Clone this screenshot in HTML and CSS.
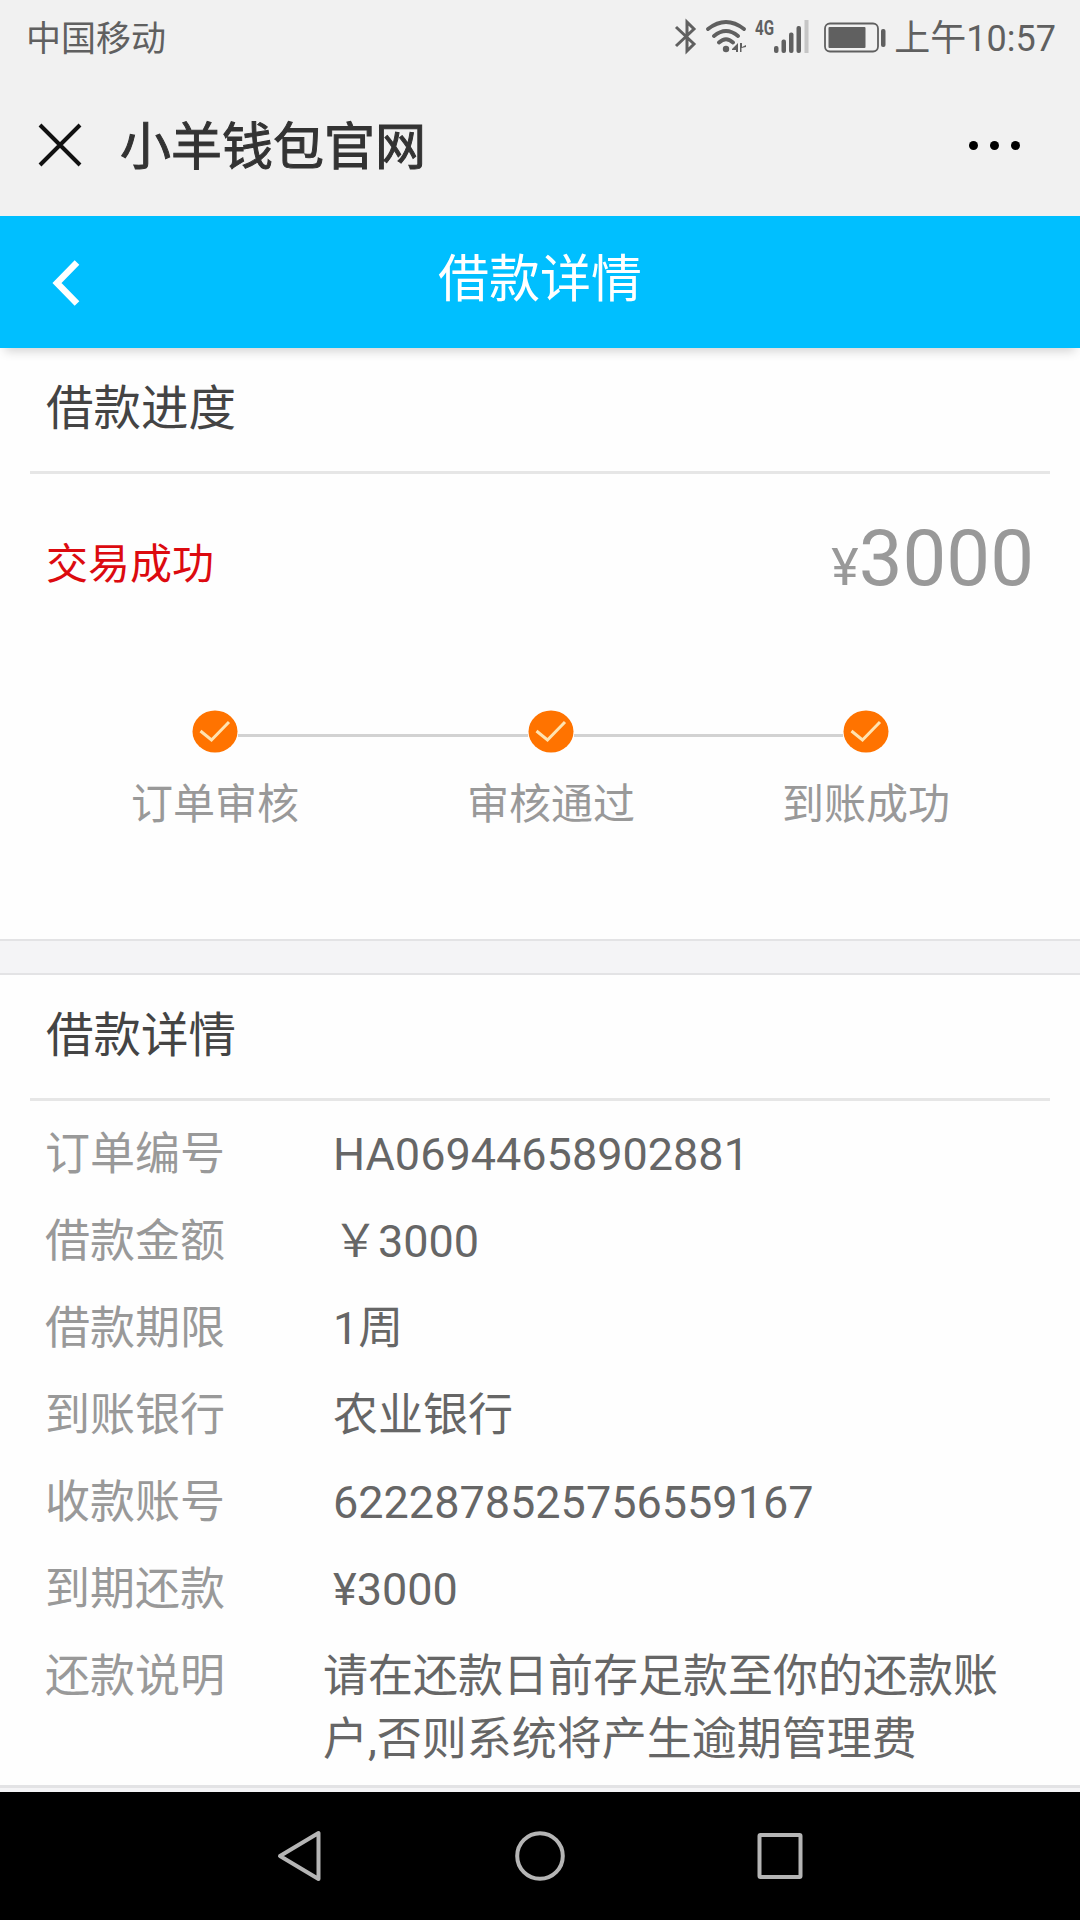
FILE: index.html
```html
<!DOCTYPE html>
<html lang="zh-CN">
<head>
    <meta charset="UTF-8">
    <meta name="viewport" content="width=device-width, initial-scale=1.0">
    <title>小羊钱包官网</title>
    <link rel="stylesheet" href="styles.css">
</head>
<body>
    <div class="status-bar">
        <span class="carrier">中国移动</span>
        <svg class="icon-status" width="214" height="40" viewBox="0 0 214 40">
            <!-- bluetooth -->
            <path class="line bt" d="M2 11 L20 28 L13 35 V6 L20 13 L2 30"/>
            <!-- wifi -->
            <path class="line wifi" d="M34 13 Q52 -1 70 13 M40 20 Q52 10 64 20 M45 26.500 Q52 20 59 26.500"/>
            <circle class="solid" cx="52" cy="33" r="3.200"/>
            <path class="solid" d="M58 33 L64 27 V36 H62 V34 H58 Z M66 27 V36 L67.500 36 V32 L72 31 V29 L68 31 V27 Z"/>
            <!-- signal -->
            <text class="net" x="81" y="19" textLength="19" lengthAdjust="spacingAndGlyphs">4G</text>
            <rect class="solid" x="100" y="30" width="4.500" height="7" rx="2"/>
            <rect class="solid" x="107.500" y="23.500" width="4.500" height="13.500" rx="2"/>
            <rect class="solid" x="115" y="16.500" width="4.500" height="20.500" rx="2"/>
            <rect class="solid" x="122.500" y="10" width="4.500" height="27" rx="2"/>
            <rect class="weak" x="130.500" y="4" width="4" height="33"/>
            <!-- battery -->
            <rect class="line shell" x="151" y="7.500" width="53" height="28" rx="5"/>
            <rect class="solid" x="154.500" y="11" width="37" height="21" rx="1"/>
            <rect class="solid" x="207" y="13" width="4.500" height="18" rx="2"/>
        </svg>
        <span class="clock">上午10:57</span>
    </div>

    <div class="title-bar">
        <svg class="close" width="44" height="44" viewBox="0 0 44 44">
            <path d="M2 2 L42 42 M42 2 L2 42"/>
        </svg>
        <h1>小羊钱包官网</h1>
        <div class="more"><i></i><i></i><i></i></div>
    </div>

    <div class="page-header">
        <svg class="back" width="28" height="46" viewBox="0 0 28 46">
            <path d="M25 2.500 L5 23 L25 43.500"/>
        </svg>
        <h2>借款详情</h2>
    </div>

    <div class="section progress">
        <h3>借款进度</h3>
        <div class="summary">
            <span class="state">交易成功</span>
            <span class="amount"><small>¥</small>3000</span>
        </div>
        <div class="steps">
            <div class="step">
                <svg width="46" height="43" viewBox="0 0 46 43"><ellipse cx="23" cy="21.500" rx="22.500" ry="21"/><path d="M8.500 21 L19.500 30 L37 12"/></svg>
                <span>订单审核</span>
            </div>
            <div class="bar"></div>
            <div class="step">
                <svg width="46" height="43" viewBox="0 0 46 43"><ellipse cx="23" cy="21.500" rx="22.500" ry="21"/><path d="M8.500 21 L19.500 30 L37 12"/></svg>
                <span>审核通过</span>
            </div>
            <div class="bar bar-short"></div>
            <div class="step">
                <svg width="46" height="43" viewBox="0 0 46 43"><ellipse cx="23" cy="21.500" rx="22.500" ry="21"/><path d="M8.500 21 L19.500 30 L37 12"/></svg>
                <span>到账成功</span>
            </div>
        </div>
    </div>

    <div class="gap"></div>

    <div class="section detail">
        <h3>借款详情</h3>
        <dl>
            <dt>订单编号</dt><dd>HA06944658902881</dd>
            <dt>借款金额</dt><dd>￥3000</dd>
            <dt>借款期限</dt><dd>1周</dd>
            <dt>到账银行</dt><dd>农业银行</dd>
            <dt>收款账号</dt><dd>6222878525756559167</dd>
            <dt>到期还款</dt><dd>¥3000</dd>
            <dt>还款说明</dt><dd class="note">请在还款日前存足款至你的还款账户,否则系统将产生逾期管理费</dd>
        </dl>
    </div>

    <div class="nav-bar">
        <svg width="50" height="56" viewBox="0 0 50 56"><path d="M5 28 L43.500 5 V51 Z"/></svg>
        <svg width="56" height="56" viewBox="0 0 56 56"><circle cx="28" cy="28" r="22.800"/></svg>
        <svg width="50" height="56" viewBox="0 0 50 56"><rect x="4.500" y="7" width="41" height="42" rx="1"/></svg>
    </div>
</body>
</html>
```
FILE: styles.css
```css
* {
    box-sizing: border-box;
}
body {
    margin: 0;
    width: 1080px;
    height: 1920px;
    display: flex;
    flex-direction: column;
    overflow: hidden;
    background-color: #f4f4f6;
    font-family: Roboto, "Noto Sans CJK SC", sans-serif;
}
h1, h2, h3, dl, dd {
    margin: 0;
    font-weight: normal;
}
svg {
    display: block;
    fill: none;
}

/* phone status bar */
.status-bar {
    height: 76px;
    padding: 0 24px 6px 26px;
    display: flex;
    align-items: center;
    background: #f1f1f1;
    color: #606060;
    font-size: 36px;
}
.carrier {
    flex: 1;
    font-size: 35px;
}
.icon-status {
    margin: 1px 6px 0 0;
}
.line {
    stroke: #606060;
}
.bt {
    stroke-width: 3;
}
.wifi {
    stroke-width: 3.8;
    stroke-linecap: round;
}
.shell {
    stroke-width: 1.8;
}
.solid {
    fill: #606060;
}
.weak {
    fill: #c6c6c6;
}
.net {
    fill: #606060;
    font-size: 21px;
    font-weight: bold;
}

/* browser title bar */
.title-bar {
    height: 140px;
    padding: 0 60px 2px 38px;
    display: flex;
    align-items: center;
    background: #f1f1f1;
    color: #333;
}
.close {
    stroke: #111;
    stroke-width: 4;
}
.title-bar h1 {
    flex: 1;
    margin-left: 38px;
    padding-top: 6px;
    font-size: 51px;
    line-height: 60px;
    -webkit-text-stroke: 1px #333;
}
.more {
    display: flex;
    gap: 12px;
}
.more i {
    width: 9px;
    height: 9px;
    border-radius: 50%;
    background: #000;
}

.page-header {
    height: 132px;
    padding: 0 52px;
    display: flex;
    align-items: center;
    background: #00bfff;
    color: #fff;
    box-shadow: 0 8px 10px -5px rgba(0, 0, 0, 0.18);
    z-index: 1;
}
.back {
    margin-top: 2px;
    stroke: #fff;
    stroke-width: 6.5;
}
.page-header h2 {
    flex: 1;
    margin-right: 28px;
    padding-bottom: 4px;
    font-size: 51px;
    line-height: 60px;
    text-align: center;
}

.section {
    background: #fefefe;
}
.section h3 {
    height: 126px;
    margin: 0 30px;
    padding-left: 16px;
    border-bottom: 3px solid #e6e6e6;
    color: #444;
    font-size: 47.5px;
    line-height: 123px;
}
.progress {
    height: 591px;
}
.summary {
    height: 180px;
    padding: 0 46px;
    display: flex;
    align-items: center;
    justify-content: space-between;
}
.state {
    margin-top: -8px;
    color: #dc0a0f;
    font-size: 42px;
}
.amount {
    margin-top: -2px;
    color: #999;
    font-size: 78px;
    line-height: 90px;
}
.amount small {
    font-size: 52px;
}

.steps {
    padding: 56px 130px 0 131px;
    display: flex;
}
.step {
    width: 168px;
    display: flex;
    flex-direction: column;
    align-items: center;
    color: #999;
    font-size: 42px;
    line-height: 50px;
    white-space: nowrap;
}
.step svg {
    margin-bottom: 27px;
}
.step ellipse {
    fill: #ff7300;
}
.step path {
    stroke: #ffe3b0;
    stroke-width: 3;
}
/* the bar runs between two circles, over the width of the labels */
.bar {
    flex: 0 0 290px;
    height: 3px;
    margin: 24px -61px 0;
    background: #d2d2d2;
}
.bar-short {
    flex-basis: 269px;
}

.gap {
    height: 36px;
    border-top: 2px solid #e3e3e5;
    border-bottom: 2px solid #e3e3e5;
}

.detail {
    height: 813px;
    border-bottom: 3px solid #e3e3e5;
}
.detail dl {
    padding: 10px 46px 0 45px;
    display: grid;
    grid-template-columns: 288px 1fr;
    font-size: 45px;
    line-height: 87px;
}
dt {
    color: #999;
}
dd {
    color: #666;
}
.detail .note {
    width: 685px;
    margin-left: -10px;
    padding-top: 12px;
    line-height: 63px;
}

.nav-bar {
    height: 128px;
    margin-top: 4px;
    padding: 0 275px;
    display: flex;
    align-items: center;
    justify-content: space-between;
    background: #000;
}
.nav-bar svg {
    stroke: #b5b5b5;
    stroke-width: 4;
    stroke-linejoin: round;
}
```
